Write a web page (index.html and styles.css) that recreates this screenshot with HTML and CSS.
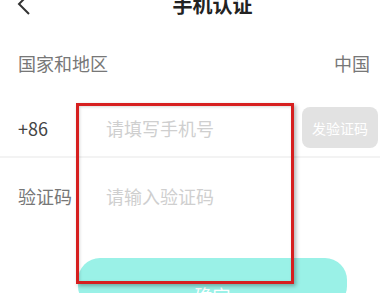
FILE: index.html
```html
<!DOCTYPE html>
<html lang="zh-CN">
  <head>
    <meta charset="UTF-8" />
    <meta name="viewport" content="width=device-width, initial-scale=1.0" />
    <title>手机认证</title>
    <link rel="stylesheet" href="styles.css">
  </head>
  <body>
    <div class="page">
      <header class="top-bar">
        <svg class="back" viewBox="0 0 16 24">
          <polyline points="13 2 3 12 13 22"></polyline>
        </svg>
        <h1>手机认证</h1>
      </header>

      <div class="row">
        <span class="label">国家和地区</span>
        <span class="value">中国</span>
      </div>

      <div class="row row-phone">
        <span class="label dark">+86</span>
        <span class="placeholder">请填写手机号</span>
        <button class="send-code">发验证码</button>
      </div>

      <div class="row row-code">
        <span class="label">验证码</span>
        <span class="placeholder">请输入验证码</span>
      </div>

      <button class="submit">确定</button>
    </div>

    <!-- annotation box drawn over the form -->
    <div class="highlight"></div>
  </body>
</html>
```

FILE: styles.css
```css
* {
  margin: 0;
  padding: 0;
  box-sizing: border-box;
  font-family: "Noto Sans CJK SC", "Noto Sans", sans-serif;
}

body {
  background: #ffffff;
  width: 380px;
  height: 293px;
  overflow: hidden;
  position: relative;
}

.page {
  margin-top: -18px;
}

.top-bar {
  height: 44px;
  display: flex;
  align-items: center;
  justify-content: center;
  position: relative;
  margin-bottom: 4px;
}

.top-bar h1 {
  font-size: 20px;
  font-weight: bold;
  color: #222222;
  margin-left: 45px;
}

.back {
  position: absolute;
  left: 16px;
  top: 10px;
  width: 16px;
  height: 24px;
  fill: none;
  stroke: #333333;
  stroke-width: 2;
}

.row {
  height: 66px;
  display: flex;
  align-items: center;
  padding: 0 10px 0 18px;
  font-size: 18px;
  white-space: nowrap;
}

.label {
  width: 88px;
  flex-shrink: 0;
  color: #777777;
}

.label.dark {
  color: #444444;
}

.value {
  margin-left: auto;
  color: #777777;
}

.placeholder {
  color: #cfcfcf;
  flex: 1;
}

.row-phone {
  height: 62px;
  padding-right: 2px;
  padding-top: 3px;
  border-bottom: 2px solid #f3f3f3;
}

.row-code {
  height: 75px;
}

.send-code {
  width: 76px;
  height: 41px;
  flex-shrink: 0;
  border: none;
  border-radius: 8px;
  background: #e2e2e2;
  color: #ffffff;
  font-size: 14px;
}

.submit {
  display: block;
  margin: 25px 0 0 78px;
  width: 269px;
  height: 50px;
  border: none;
  border-radius: 22px;
  background: #9af1e7;
  color: #ffffff;
  font-size: 18px;
  padding-top: 24px;
}

.highlight {
  position: absolute;
  left: 76px;
  top: 103px;
  width: 218px;
  height: 181px;
  border: 3px solid #d61f1f;
  box-shadow: 2px 2px 4px rgba(0, 0, 0, 0.3), inset 1px 1px 3px rgba(0, 0, 0, 0.15);
}
```
